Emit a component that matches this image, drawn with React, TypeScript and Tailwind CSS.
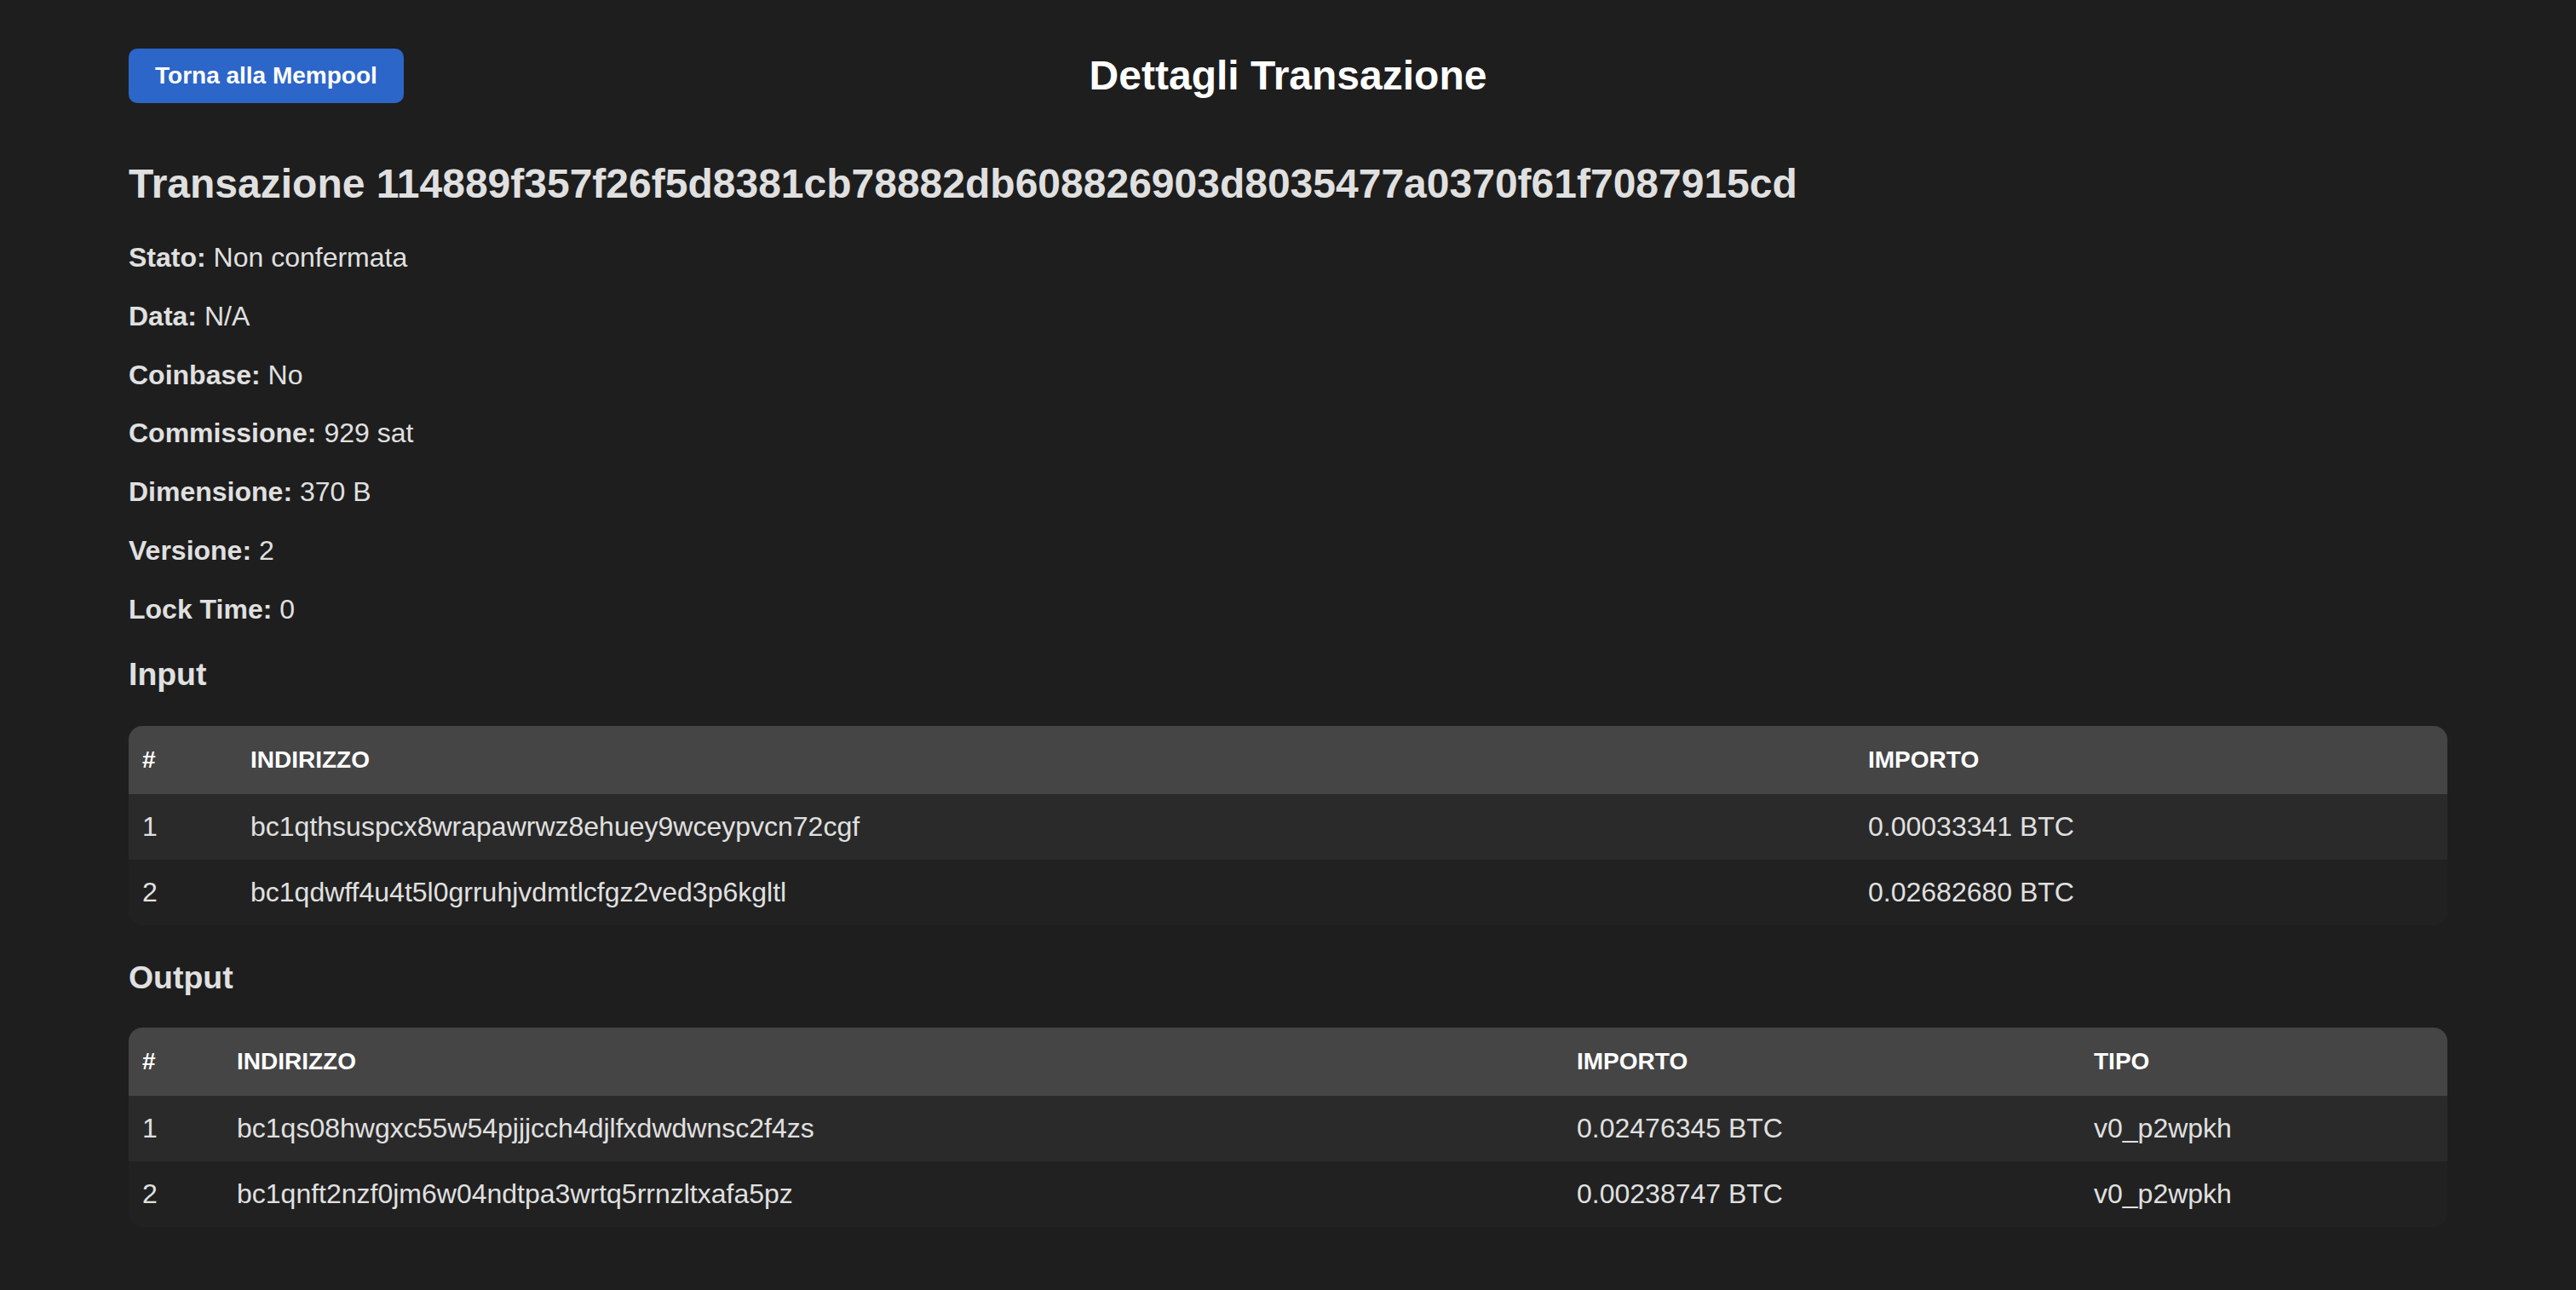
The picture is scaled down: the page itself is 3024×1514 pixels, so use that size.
import React from "react";

const info: [string, string][] = [
  ["Stato:", "Non confermata"],
  ["Data:", "N/A"],
  ["Coinbase:", "No"],
  ["Commissione:", "929 sat"],
  ["Dimensione:", "370 B"],
  ["Versione:", "2"],
  ["Lock Time:", "0"],
];

const inputs = [
  { n: 1, addr: "bc1qthsuspcx8wrapawrwz8ehuey9wceypvcn72cgf", amt: "0.00033341 BTC" },
  { n: 2, addr: "bc1qdwff4u4t5l0grruhjvdmtlcfgz2ved3p6kgltl", amt: "0.02682680 BTC" },
];

const outputs = [
  { n: 1, addr: "bc1qs08hwgxc55w54pjjjcch4djlfxdwdwnsc2f4zs", amt: "0.02476345 BTC", type: "v0_p2wpkh" },
  { n: 2, addr: "bc1qnft2nzf0jm6w04ndtpa3wrtq5rrnzltxafa5pz", amt: "0.00238747 BTC", type: "v0_p2wpkh" },
];

const th = "px-[16px] py-[24px] text-left text-[28px] leading-[32px] font-bold uppercase text-white";
const td = "px-[16px] py-[20px] text-left text-[32px] leading-[37px] text-[#e0e0e0]";

export default function App() {
  return (
    <div
      className="min-h-screen bg-[#1e1e1e] px-[151px] pt-[29px] pb-[60px] flex flex-col"
      style={{ fontFamily: '"Liberation Sans", Arial, sans-serif' }}
    >
      <div className="grid grid-cols-[1fr_auto_1fr] items-center h-[119px]">
        <button className="justify-self-start bg-[#2c66c8] text-white font-bold text-[28px] leading-[32px] px-[31px] py-[16px] rounded-[10px]">
          Torna alla Mempool
        </button>
        <h1 className="text-[48px] leading-[55px] font-bold text-white">Dettagli Transazione</h1>
        <div />
      </div>

      <h2 className="mt-[40px] text-[48px] leading-[55px] font-bold text-[#e0e0e0]">
        Transazione 114889f357f26f5d8381cb78882db608826903d8035477a0370f61f7087915cd
      </h2>

      <div className="mt-[41px] flex flex-col gap-[32px]">
        {info.map(([k, v]) => (
          <p key={k} className="text-[32px] leading-[36.8px] text-[#e0e0e0]">
            <strong className="font-bold">{k}</strong> {v}
          </p>
        ))}
      </div>

      <h3 className="mt-[36px] text-[37.44px] leading-[43px] font-bold text-[#e0e0e0]">Input</h3>
      <div className="mt-[39px] rounded-[16px] overflow-hidden">
        <table className="w-full table-fixed border-collapse">
          <colgroup>
            <col className="w-[127px]" />
            <col className="w-[1899px]" />
            <col />
          </colgroup>
          <thead>
            <tr className="bg-[#454545]">
              <th className={th}>#</th>
              <th className={th}>Indirizzo</th>
              <th className={th}>Importo</th>
            </tr>
          </thead>
          <tbody>
            {inputs.map((r, i) => (
              <tr key={r.n} className={i % 2 === 0 ? "bg-[#2a2a2a]" : "bg-[#212121]"}>
                <td className={td}>{r.n}</td>
                <td className={td}>{r.addr}</td>
                <td className={td}>{r.amt}</td>
              </tr>
            ))}
          </tbody>
        </table>
      </div>

      <h3 className="mt-[40px] text-[37.44px] leading-[43px] font-bold text-[#e0e0e0]">Output</h3>
      <div className="mt-[37px] rounded-[16px] overflow-hidden">
        <table className="w-full table-fixed border-collapse">
          <colgroup>
            <col className="w-[111px]" />
            <col className="w-[1573px]" />
            <col className="w-[607px]" />
            <col />
          </colgroup>
          <thead>
            <tr className="bg-[#454545]">
              <th className={th}>#</th>
              <th className={th}>Indirizzo</th>
              <th className={th}>Importo</th>
              <th className={th}>Tipo</th>
            </tr>
          </thead>
          <tbody>
            {outputs.map((r, i) => (
              <tr key={r.n} className={i % 2 === 0 ? "bg-[#2a2a2a]" : "bg-[#212121]"}>
                <td className={td}>{r.n}</td>
                <td className={td}>{r.addr}</td>
                <td className={td}>{r.amt}</td>
                <td className={td}>{r.type}</td>
              </tr>
            ))}
          </tbody>
        </table>
      </div>
    </div>
  );
}
